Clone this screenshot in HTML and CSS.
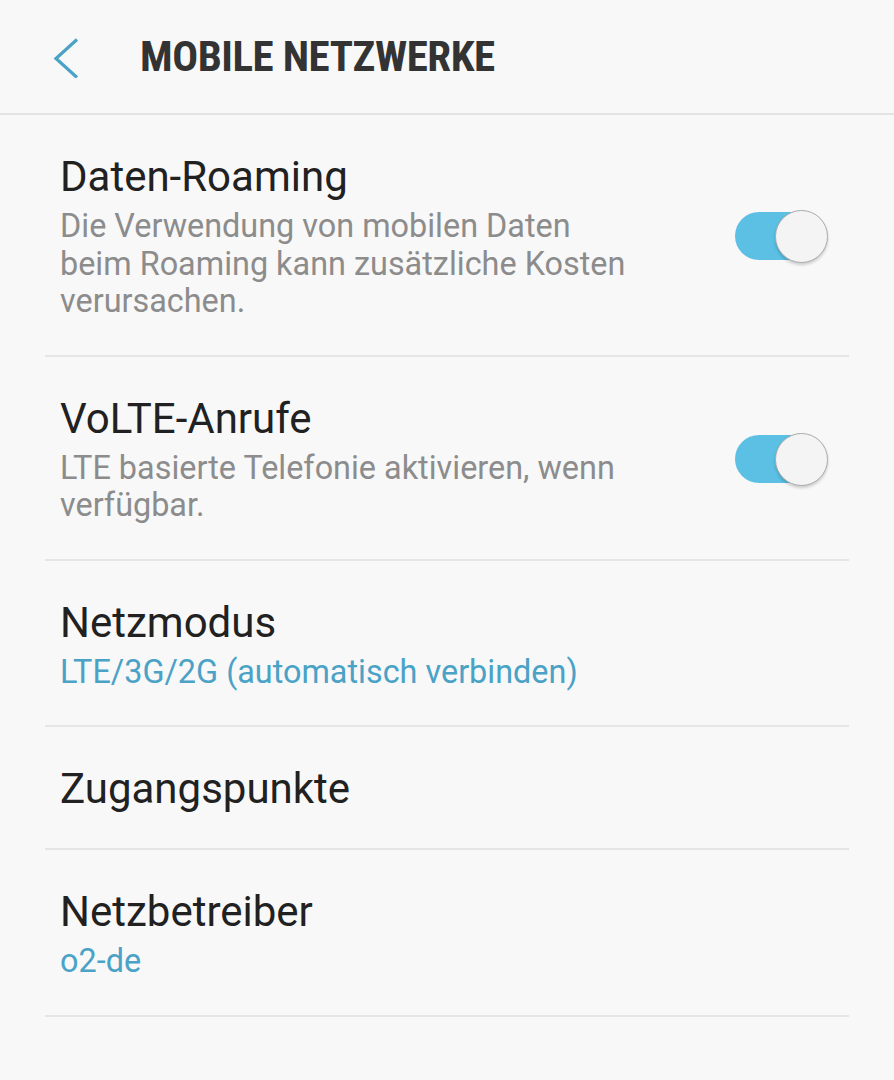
FILE: index.html
```html
<!DOCTYPE html>
<html lang="de">
<head>
<meta charset="utf-8">
<title>Mobile Netzwerke</title>
<link rel="stylesheet" href="styles.css">
</head>
<body>
<div class="screen">
  <header class="appbar">
    <button class="back" aria-label="Zurück">
      <svg width="30" height="44" viewBox="0 0 30 44" aria-hidden="true">
        <polyline points="25,5.5 4,24.5 25,43.5" fill="none" stroke="#4aa2c6" stroke-width="3.2" stroke-linecap="butt" stroke-linejoin="miter"/>
      </svg>
    </button>
    <h1 class="appbar-title">MOBILE NETZWERKE</h1>
  </header>

  <ul class="list">
    <li class="item">
      <div class="text">
        <div class="title">Daten-Roaming</div>
        <div class="sub">Die Verwendung von mobilen Daten beim Roaming kann zusätzliche Kosten verursachen.</div>
      </div>
      <div class="switch on"><span class="track"></span><span class="thumb"></span></div>
    </li>
    <li class="item">
      <div class="text">
        <div class="title">VoLTE-Anrufe</div>
        <div class="sub">LTE basierte Telefonie aktivieren, wenn verfügbar.</div>
      </div>
      <div class="switch on"><span class="track"></span><span class="thumb"></span></div>
    </li>
    <li class="item">
      <div class="text">
        <div class="title">Netzmodus</div>
        <div class="sub value">LTE/3G/2G (automatisch verbinden)</div>
      </div>
    </li>
    <li class="item">
      <div class="text">
        <div class="title">Zugangspunkte</div>
      </div>
    </li>
    <li class="item">
      <div class="text">
        <div class="title">Netzbetreiber</div>
        <div class="sub value">o2-de</div>
      </div>
    </li>
  </ul>
</div>
</body>
</html>
```

FILE: styles.css
```css
* { box-sizing: border-box; }

html, body {
  margin: 0;
  padding: 0;
  background: #f8f8f8;
}

body {
  font-family: Roboto, "Noto Sans", "Liberation Sans", sans-serif;
  color: #222222;
}

.screen {
  width: 894px;
  min-height: 1080px;
  background: #f8f8f8;
}

.appbar {
  height: 115px;
  display: flex;
  align-items: center;
  border-bottom: 2px solid #e4e4e4;
  padding-left: 52px;
  padding-bottom: 1px;
}

.back {
  width: 30px;
  height: 44px;
  padding: 0;
  margin: 0 58px 0 0;
  border: 0;
  background: none;
  display: flex;
  align-items: center;
  justify-content: center;
}

.back svg { display: block; }

.appbar-title {
  margin: 0;
  font-family: "Roboto Condensed", Roboto, "Liberation Sans Narrow", sans-serif;
  font-stretch: condensed;
  font-weight: 700;
  font-size: 43px;
  line-height: 50px;
  color: #333333;
  letter-spacing: -0.45px;
}

.list {
  list-style: none;
  margin: 0 45px;
  padding: 0;
}

.item {
  display: flex;
  align-items: center;
  justify-content: space-between;
  padding: 37px 21px 34px 15px;
  border-bottom: 2px solid #e5e5e5;
}

.text {
  max-width: 578px;
}

.title {
  font-size: 42px;
  line-height: 50px;
  color: #212121;
}

.sub {
  margin-top: 6px;
  font-size: 32.4px;
  line-height: 37.5px;
  color: #8c8c8c;
}

.sub.value {
  color: #4aa2c6;
}

.switch {
  position: relative;
  width: 93px;
  height: 52px;
  flex: none;
}

.track {
  position: absolute;
  left: 0;
  top: 2px;
  width: 90px;
  height: 48px;
  border-radius: 24px;
  background: #5bc0e4;
}

.thumb {
  position: absolute;
  right: 0;
  top: 0;
  width: 53px;
  height: 53px;
  border-radius: 50%;
  background: #f4f4f4;
  border: 1.5px solid #ababab;
  box-shadow: 0 2px 3px rgba(0, 0, 0, 0.18);
}
```
